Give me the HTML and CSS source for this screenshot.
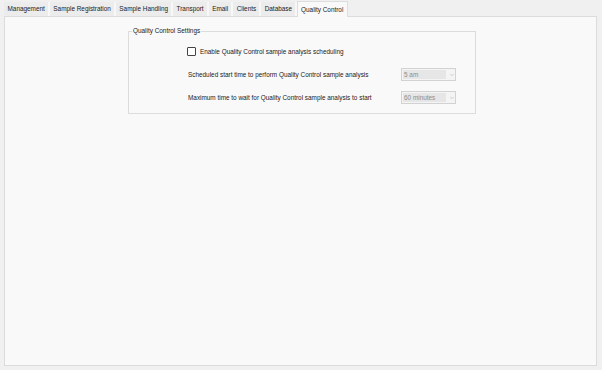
FILE: index.html
```html
<!DOCTYPE html>
<html>
<head>
<meta charset="utf-8">
<link rel="stylesheet" href="styles.css">
</head>
<body>
<div class="window">
  <div class="tabs">
    <div class="tab">Management</div>
    <div class="tab">Sample Registration</div>
    <div class="tab">Sample Handling</div>
    <div class="tab">Transport</div>
    <div class="tab">Email</div>
    <div class="tab">Clients</div>
    <div class="tab">Database</div>
    <div class="tab active">Quality Control</div>
  </div>
  <div class="panel">
    <fieldset class="group">
      <legend>Quality Control Settings</legend>
      <div class="rows">
        <label class="check-row"><span class="checkbox"></span><span>Enable Quality Control sample analysis scheduling</span></label>
        <div class="label">Scheduled start time to perform Quality Control sample analysis</div>
        <div class="combo"><span class="value">5 am</span><svg class="chev" width="6" height="4" viewBox="0 0 6 4"><path d="M0.5 0.5 L3 3 L5.5 0.5" fill="none" stroke="#a8a8a8" stroke-width="0.8"/></svg></div>
        <div class="label">Maximum time to wait for Quality Control sample analysis to start</div>
        <div class="combo"><span class="value">60 minutes</span><svg class="chev" width="6" height="4" viewBox="0 0 6 4"><path d="M0.5 0.5 L3 3 L5.5 0.5" fill="none" stroke="#a8a8a8" stroke-width="0.8"/></svg></div>
      </div>
    </fieldset>
  </div>
</div>
</body>
</html>
```

FILE: styles.css
```css
html, body {
  margin: 0;
  padding: 0;
  height: 100%;
}
body {
  background: #f0f0f0;
  font-family: "Liberation Sans", Arial, sans-serif;
  font-size: 6.4px;
  color: #1a1a1a;
}
.window {
  box-sizing: border-box;
  height: 370px;
  padding: 1px 5px 4px 4px;
  display: flex;
  flex-direction: column;
}
.tabs {
  display: flex;
  height: 15px;
  align-items: flex-end;
}
.tab {
  box-sizing: border-box;
  height: 14px;
  line-height: 13px;
  padding: 0 3px 0 3.5px;
  background: #ececec;
  border-right: 2px solid #f7f7f7;
  white-space: nowrap;
}
.tab.active {
  height: 16px;
  line-height: 15px;
  background: #f9f9f9;
  border: 1px solid #dedede;
  border-bottom: none;
  margin-bottom: -1px;
  position: relative;
  z-index: 1;
  padding: 0 4px 0 3px;
}
.panel {
  flex: 1;
  background: #f9f9f9;
  border: 1px solid #dcdcdc;
}
.group {
  box-sizing: border-box;
  width: 348px;
  margin: 10px 0 0 123px;
  padding: 10px 0 9px 0;
  border: 1px solid #dcdcdc;
  min-width: 0;
}
.group legend {
  padding: 0 1px;
  margin-left: 3px;
  line-height: 8px;
  color: #222;
}
.rows {
  display: grid;
  grid-template-columns: 213px 55px;
  grid-auto-rows: 13px;
  row-gap: 10px;
  align-items: center;
  padding-left: 59px;
}
.check-row {
  grid-column: 1 / span 2;
  display: flex;
  align-items: center;
  margin-left: -1px;
}
.checkbox {
  box-sizing: border-box;
  width: 9px;
  height: 9px;
  border: 1px solid #444;
  border-radius: 1px;
  background: #fff;
  margin-right: 4px;
}
.label {
  white-space: nowrap;
}
.combo {
  box-sizing: border-box;
  height: 13px;
  border: 1px solid #d2d2d2;
  background: #f4f4f4;
  display: flex;
  align-items: center;
  padding: 1px;
}
.combo .value {
  flex: 0 0 42px;
  height: 9px;
  line-height: 9px;
  background: #e6e6e6;
  color: #8c8c8c;
  padding-left: 1px;
  white-space: nowrap;
}
.combo .chev {
  margin-left: 4px;
}
```
